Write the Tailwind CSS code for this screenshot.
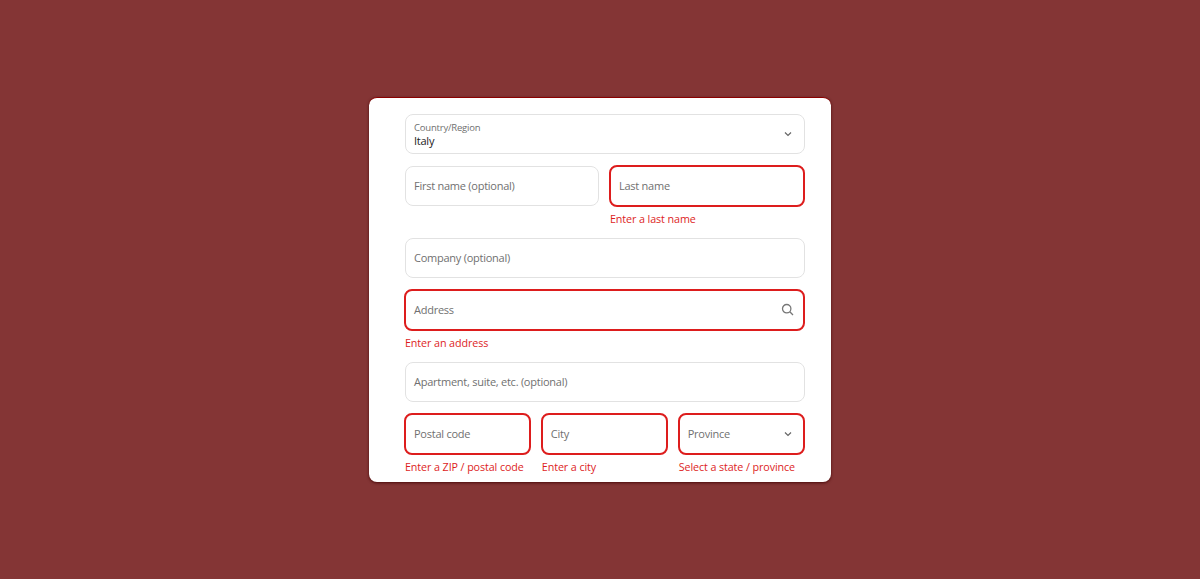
<!DOCTYPE html>
<html lang="en">
<head>
<meta charset="utf-8">
<title>Address form</title>
<script src="https://cdn.jsdelivr.net/npm/@tailwindcss/browser@4"></script>
</head>
<body class="m-0 h-[579px] w-full overflow-hidden bg-[#843535] font-['Open_Sans','Noto_Sans',sans-serif]">
<div class="flex h-[579px] items-start justify-center pt-[97px]">
  <form class="flex h-[385px] w-[462px] flex-col gap-[12px] overflow-hidden rounded-[8px] border-t border-[#8b0000] bg-white pl-[36px] pr-[26px] pt-[16px] shadow-[0_1px_3px_rgba(60,0,0,0.8)]">
    <div class="relative h-[40px] shrink-0 rounded-[8px] border border-[#e2e2e2] px-[8px]">
      <div class="pt-[6px] text-[9.5px] leading-[13px] tracking-[-0.2px] text-[#707070]">Country/Region</div>
      <div class="-mt-px text-[11px] leading-[15px] tracking-[-0.25px] text-[#222]">Italy</div>
      <svg class="absolute right-[11px] top-[14px] h-[10px] w-[10px] text-[#666]" viewBox="0 0 10 10" fill="none" stroke="currentColor" stroke-width="1.2"><path d="M2 3.5 5 6.5 8 3.5"/></svg>
    </div>
    <div class="grid h-[60px] shrink-0 grid-cols-[194px_1fr] gap-x-[11px]">
      <div class="flex h-[40px] items-center rounded-[8px] border border-[#e2e2e2] px-[8px] text-[11px] tracking-[-0.25px] text-[#707070]">First name (optional)</div>
      <div>
        <div class="-ml-px -mt-px flex h-[42px] items-center rounded-[8px] border-2 border-[#dd1d1d] px-[8px] text-[11px] tracking-[-0.25px] text-[#707070]">Last name</div>
        <div class="mt-[5px] text-[10.75px] leading-[15px] tracking-[-0.1px] text-[#dd1d1d]">Enter a last name</div>
      </div>
    </div>
    <div class="flex h-[40px] shrink-0 items-center rounded-[8px] border border-[#e2e2e2] px-[8px] text-[11px] tracking-[-0.25px] text-[#707070]">Company (optional)</div>
    <div class="h-[60px] shrink-0">
      <div class="relative -ml-px -mt-px flex h-[42px] items-center rounded-[8px] border-2 border-[#dd1d1d] px-[8px] text-[11px] tracking-[-0.25px] text-[#707070]">Address
        <svg class="absolute right-[9px] top-[12px] h-[13px] w-[13px] text-[#777]" viewBox="0 0 13 13" fill="none" stroke="currentColor" stroke-width="1.3"><circle cx="5.7" cy="5.7" r="4.2"/><path d="M8.8 8.8 12 12"/></svg>
      </div>
      <div class="mt-[5px] text-[10.75px] leading-[15px] tracking-[-0.1px] text-[#dd1d1d]">Enter an address</div>
    </div>
    <div class="flex h-[40px] shrink-0 items-center rounded-[8px] border border-[#e2e2e2] px-[8px] text-[11px] tracking-[-0.25px] text-[#707070]">Apartment, suite, etc. (optional)</div>
    <div class="grid h-[60px] shrink-0 grid-cols-3 gap-x-[10.5px]">
      <div>
        <div class="-ml-px -mt-px flex h-[42px] items-center rounded-[8px] border-2 border-[#dd1d1d] px-[8px] text-[11px] tracking-[-0.25px] text-[#707070]">Postal code</div>
        <div class="mt-[5px] whitespace-nowrap text-[10.75px] leading-[15px] tracking-[-0.1px] text-[#dd1d1d]">Enter a ZIP / postal code</div>
      </div>
      <div>
        <div class="-ml-px -mt-px flex h-[42px] items-center rounded-[8px] border-2 border-[#dd1d1d] px-[8px] text-[11px] tracking-[-0.25px] text-[#707070]">City</div>
        <div class="mt-[5px] text-[10.75px] leading-[15px] tracking-[-0.1px] text-[#dd1d1d]">Enter a city</div>
      </div>
      <div>
        <div class="relative -ml-px -mt-px flex h-[42px] items-center rounded-[8px] border-2 border-[#dd1d1d] px-[8px] text-[11px] tracking-[-0.25px] text-[#707070]">Province
          <svg class="absolute right-[10px] top-[14px] h-[10px] w-[10px] text-[#666]" viewBox="0 0 10 10" fill="none" stroke="currentColor" stroke-width="1.2"><path d="M2 3.5 5 6.5 8 3.5"/></svg>
        </div>
        <div class="mt-[5px] whitespace-nowrap text-[10.75px] leading-[15px] tracking-[-0.1px] text-[#dd1d1d]">Select a state / province</div>
      </div>
    </div>
  </form>
</div>
</body>
</html>
